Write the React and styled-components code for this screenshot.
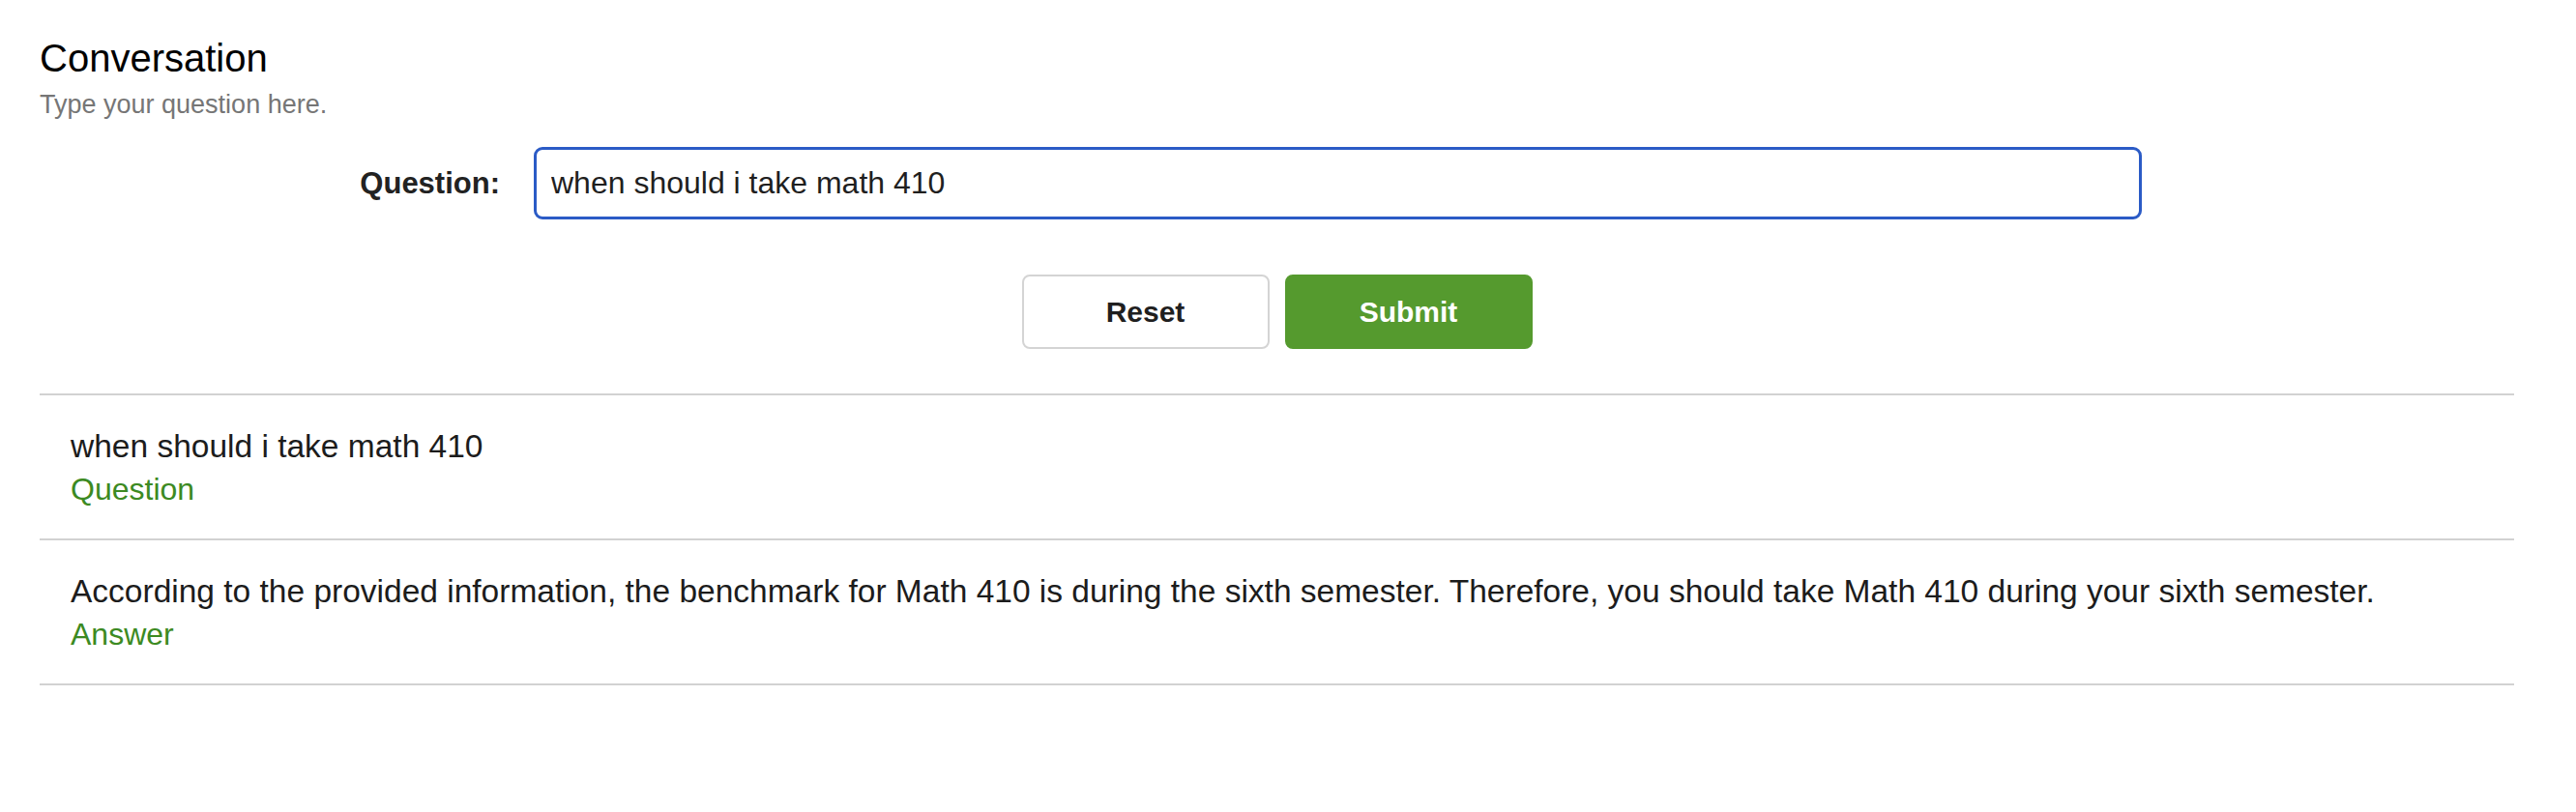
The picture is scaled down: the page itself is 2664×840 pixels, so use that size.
import React, { useState } from 'react';
import styled, { createGlobalStyle } from 'styled-components';

/* style */
const GlobalStyle = createGlobalStyle`
  html, body {
    margin: 0;
    padding: 0;
    background: #ffffff;
  }
  body {
    font-family: "Liberation Sans", Arial, sans-serif;
    color: #1f1f1f;
  }
  * {
    box-sizing: border-box;
  }
`;

const Page = styled.div`
  padding: 36px 64px 0 41px;
`;

// header
const Title = styled.h1`
  margin: 0;
  font-size: 40px;
  line-height: 48px;
  font-weight: normal;
  color: #000;
`;
const Subtitle = styled.p`
  margin: 8px 0 0;
  font-size: 27px;
  line-height: 32px;
  color: #767676;
`;

// form
const FormRow = styled.div`
  display: grid;
  grid-template-columns: 476px 1663px;
  column-gap: 35px;
  align-items: center;
  margin-top: 28px;
`;
const Label = styled.label`
  justify-self: end;
  font-size: 31px;
  font-weight: bold;
  color: #222;
`;
const Input = styled.input`
  height: 75px;
  width: 100%;
  padding: 0 15px;
  border: 3px solid #2b5bc6;
  border-radius: 9px;
  outline: none;
  font-family: inherit;
  font-size: 32px;
  color: #1f1f1f;
  background: #fff;
`;
const ButtonRow = styled.div`
  display: flex;
  justify-content: center;
  gap: 16px;
  margin-top: 57px;
`;
const Button = styled.button`
  width: 256px;
  height: 77px;
  border-radius: 8px;
  font-family: inherit;
  font-size: 30px;
  font-weight: bold;
  cursor: pointer;
  border: 2px solid ${p => (p.primary ? '#559a2e' : '#d4d4d4')};
  background: ${p => (p.primary ? '#559a2e' : '#ffffff')};
  color: ${p => (p.primary ? '#ffffff' : '#1f1f1f')};
`;

// conversation
const Thread = styled.div`
  margin-top: 46px;
  border-top: 2px solid #d2d2d2;
`;
const Message = styled.div`
  padding: 31px 32px 29px;
  border-bottom: 2px solid #d2d2d2;
`;
const MessageText = styled.div`
  font-size: 33.5px;
  line-height: 44px;
  color: #1c1c1c;
  white-space: nowrap;
`;
const Role = styled.div`
  font-size: 32px;
  line-height: 44px;
  color: #3c8a22;
`;

const messages = [
  { text: 'when should i take math 410', role: 'Question' },
  {
    text: 'According to the provided information, the benchmark for Math 410 is during the sixth semester. Therefore, you should take Math 410 during your sixth semester.',
    role: 'Answer',
  },
];

export default function App() {
  const [question, setQuestion] = useState('when should i take math 410');

  return (
    <Page>
      <GlobalStyle />
      <Title>Conversation</Title>
      <Subtitle>Type your question here.</Subtitle>

      <FormRow>
        <Label htmlFor="question">Question:</Label>
        <Input
          id="question"
          value={question}
          onChange={e => setQuestion(e.target.value)}
        />
      </FormRow>
      <ButtonRow>
        <Button onClick={() => setQuestion('')}>Reset</Button>
        <Button primary>Submit</Button>
      </ButtonRow>

      <Thread>
        {messages.map((m, i) => (
          <Message key={i}>
            <MessageText>{m.text}</MessageText>
            <Role>{m.role}</Role>
          </Message>
        ))}
      </Thread>
    </Page>
  );
}
